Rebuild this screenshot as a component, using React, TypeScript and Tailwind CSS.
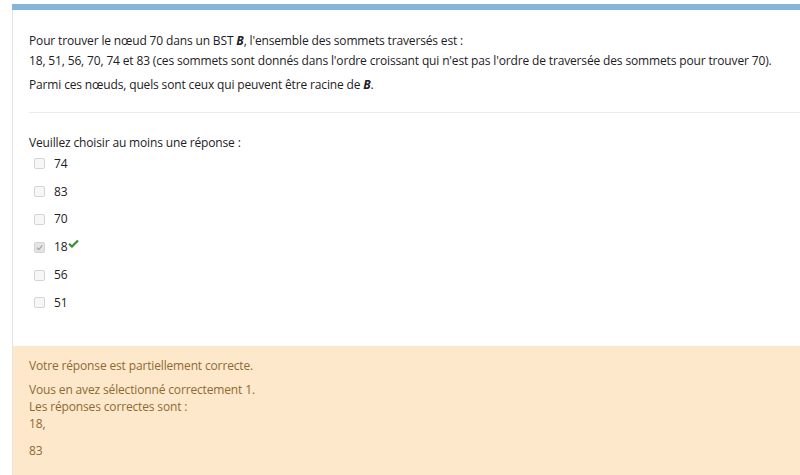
import React from 'react';

const options = [
  { label: '74', checked: false, correct: false },
  { label: '83', checked: false, correct: false },
  { label: '70', checked: false, correct: false },
  { label: '18', checked: true, correct: true },
  { label: '56', checked: false, correct: false },
  { label: '51', checked: false, correct: false },
];

function Box({ checked }: { checked: boolean }) {
  return (
    <span
      className={`flex h-[11px] w-[11px] items-center justify-center rounded-[2px] border border-[#d4d4d4] ${
        checked ? 'bg-[#e4e4e4]' : 'bg-[#f7f7f7]'
      }`}
    >
      {checked && (
        <svg viewBox="0 0 10 10" className="h-[9px] w-[9px]">
          <path d="M2 5.2 L4.2 7.3 L8 2.8" fill="none" stroke="#a8a8a8" strokeWidth="1.4" />
        </svg>
      )}
    </span>
  );
}

function Tick() {
  return (
    <svg viewBox="0 0 12 10" className="ml-[1px] h-[9px] w-[11px] -translate-y-[4px]">
      <path d="M1 5.3 L4.3 8.4 L11 1.6" fill="none" stroke="#3d8b3d" strokeWidth="2.4" />
    </svg>
  );
}

export default function App() {
  return (
    <div
      className="h-[475px] w-[800px] overflow-hidden bg-white pl-[12px] pt-[4px] text-[12px] tracking-[-0.15px] text-[#1d2125]"
      style={{ fontFamily: '"Segoe UI", "Open Sans", "Noto Sans", sans-serif' }}
    >
      <div className="border-t-[6px] border-[#86b5da]">
        <div className="border-l border-[#e6e6e6]">
          <div className="pl-4 pt-[21px]">
            <p className="leading-[20px]">
              Pour trouver le nœud 70 dans un BST <b><i>B</i></b>, l'ensemble des sommets traversés est :
              <br />
              18, 51, 56, 70, 74 et 83 (ces sommets sont donnés dans l'ordre croissant qui n'est pas l'ordre de
              traversée des sommets pour trouver 70).
            </p>
            <p className="mt-[4px] leading-[20px]">
              Parmi ces nœuds, quels sont ceux qui peuvent être racine de <b><i>B</i></b>.
            </p>
            <div className="mt-[17px] border-t border-[#ececec]" />
            <div className="pt-[20px] leading-[20px]">Veuillez choisir au moins une réponse :</div>
            <ul className="-mt-[3px] pb-[29px]">
              {options.map((o) => (
                <li key={o.label} className="flex h-[27.8px] items-center pl-[5px]">
                  <Box checked={o.checked} />
                  <span className="ml-[9px] flex items-center">
                    {o.label}
                    {o.correct && <Tick />}
                  </span>
                </li>
              ))}
            </ul>
          </div>
          <div className="bg-[#fde8cc] pb-[20px] pl-4 pt-[11px] leading-[17px] text-[#8d6a31]">
            <p>Votre réponse est partiellement correcte.</p>
            <p className="mt-[7px]">Vous en avez sélectionné correctement 1.</p>
            <p>Les réponses correctes sont :</p>
            <p>18,</p>
            <p className="mt-[10px]">83</p>
          </div>
        </div>
      </div>
    </div>
  );
}
